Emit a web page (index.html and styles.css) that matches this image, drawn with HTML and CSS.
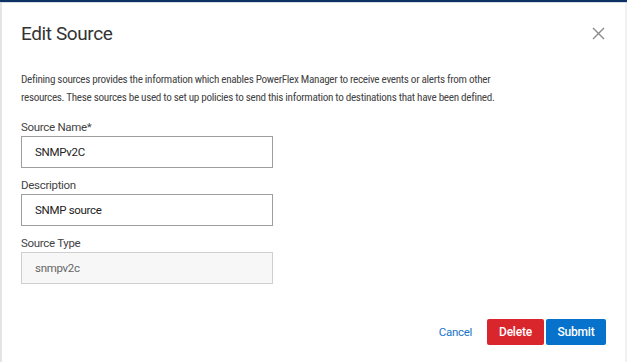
FILE: index.html
```html
<!DOCTYPE html>
<html lang="en">
<head>
    <meta charset="UTF-8">
    <title>Edit Source</title>
    <link rel="stylesheet" href="styles.css">
</head>
<body>
    <div class="topbar"></div>
    <div class="modal">
        <div class="modal-header">
            <h1>Edit Source</h1>
            <button class="close-btn" aria-label="Close">
                <svg width="13" height="13" viewBox="0 0 13 13">
                    <path d="M1 1 L12 12 M12 1 L1 12" stroke="#8a8a8a" stroke-width="1.4" fill="none"/>
                </svg>
            </button>
        </div>
        <p class="intro">Defining sources provides the information which enables PowerFlex Manager to receive events or alerts from other resources. These sources be used to set up policies to send this information to destinations that have been defined.</p>

        <div class="field">
            <label>Source Name*</label>
            <input type="text" value="SNMPv2C">
        </div>
        <div class="field">
            <label>Description</label>
            <input type="text" value="SNMP source">
        </div>
        <div class="field">
            <label>Source Type</label>
            <input type="text" value="snmpv2c" class="readonly" readonly>
        </div>

        <div class="actions">
            <button class="btn-link">Cancel</button>
            <button class="btn btn-delete">Delete</button>
            <button class="btn btn-submit">Submit</button>
        </div>
    </div>
</body>
</html>
```

FILE: styles.css
```css
* {
    margin: 0;
    padding: 0;
    box-sizing: border-box;
    font-family: Roboto, 'Liberation Sans', sans-serif;
}

html, body {
    height: 100%;
    overflow: hidden;
    background: #fff;
}

.topbar {
    height: 3px;
    background: #0b3263;
    border-bottom: 1px solid #d6dbe2;
}

.modal {
    height: calc(100% - 3px);
    border-left: 2px solid #e4e4e4;
    border-right: 2px solid #f1f1f1;
    padding: 0 19px;
}

.modal-header {
    display: flex;
    justify-content: space-between;
    align-items: center;
    padding-top: 3px;
    height: 58px;
}

h1 {
    font-size: 19px;
    font-weight: 400;
    color: #333;
    letter-spacing: -0.4px;
}

.close-btn {
    background: none;
    border: none;
    margin-right: 1px;
    display: flex;
}

.intro {
    font-family: 'Liberation Sans Narrow', 'Roboto Condensed', 'DejaVu Sans Condensed', Roboto, sans-serif;
    font-stretch: condensed;
    font-size: 11.2px;
    line-height: 18px;
    color: #444;
    letter-spacing: -0.32px;
    max-width: 480px;
    margin-top: 10px;
    margin-bottom: 13px;
}

.field {
    display: flex;
    flex-direction: column;
    margin-bottom: 10px;
}

.field label {
    font-size: 11.5px;
    line-height: 14px;
    color: #444;
    margin-bottom: 2px;
    letter-spacing: -0.3px;
}

.field input {
    width: 252px;
    height: 32px;
    border: 1px solid #9e9e9e;
    padding: 0 13px;
    font-size: 11.5px;
    color: #222;
    background: #fff;
    letter-spacing: -0.3px;
}

.field input.readonly {
    background: #f7f7f7;
    border-color: #cfcfcf;
    color: #666;
}

.actions {
    display: flex;
    justify-content: flex-end;
    align-items: center;
    margin-top: 35px;
    gap: 2px;
}

.btn-link {
    background: none;
    border: none;
    color: #1a73c8;
    font-size: 11.5px;
    margin-right: 13px;
    letter-spacing: -0.3px;
}

.btn {
    height: 26px;
    border: none;
    border-radius: 2px;
    color: #fff;
    font-size: 12px;
    font-weight: 500;
    padding: 0 8px;
    letter-spacing: -0.2px;
}

.btn-delete {
    background: #d9262c;
    width: 57px;
}

.btn-submit {
    background: #0672cb;
    width: 60px;
}
```
